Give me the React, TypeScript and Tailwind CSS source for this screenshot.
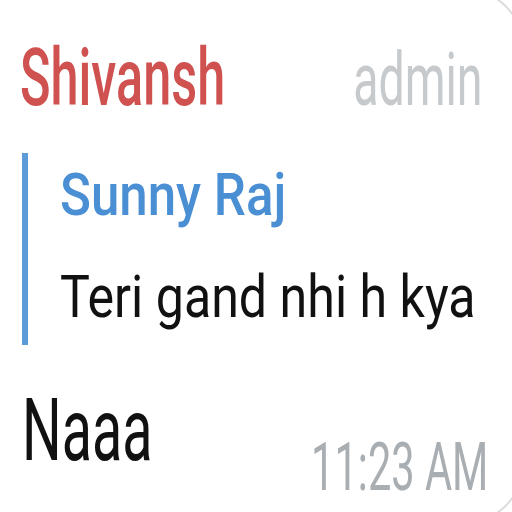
import React from "react";

export default function App() {
  return (
    <div className="relative w-[512px] h-[512px] overflow-hidden bg-white font-['Roboto',sans-serif]">
      <div className="pointer-events-none absolute top-[-12px] right-[-12px] bottom-[-12px] left-[-80px] rounded-[60px] border-2 border-[#dcdcdc]" />
      <div className="flex flex-col pl-[20px] pr-[29px] pt-[38px]">
        <div className="flex items-baseline justify-between h-[80px]">
          <div className="flex w-[205px] items-baseline justify-start">
            <span className="inline-block shrink-0 origin-left scale-x-[0.63] whitespace-nowrap text-[80px] leading-[80px] font-medium text-[#cf5150]">
              Shivansh
            </span>
          </div>
          <div className="flex w-[128px] items-baseline justify-end">
            <span className="inline-block shrink-0 origin-right scale-x-[0.62] whitespace-nowrap text-[75px] leading-[80px] text-[#c6cacd]">
              admin
            </span>
          </div>
        </div>
        <div className="ml-[2px] mt-[35px] flex flex-col border-l-[6px] border-[#5a9bd8] pl-[32px] pt-[12px] pb-[19px]">
          <span className="inline-block origin-left scale-x-[0.865] whitespace-nowrap text-[59px] leading-[59px] font-medium text-[#4a8fd4]">
            Sunny Raj
          </span>
          <span className="mt-[43px] inline-block origin-left scale-x-[0.85] whitespace-nowrap text-[59px] leading-[59px] text-[#111111]">
            Teri gand nhi h kya
          </span>
        </div>
        <div className="mt-[42px] flex items-start justify-between pl-[2px] mr-[-5px]">
          <div className="flex w-[130px] justify-start">
            <span className="inline-block shrink-0 origin-left scale-x-[0.64] whitespace-nowrap text-[87px] leading-[87px] text-[#111111]">
              Naaa
            </span>
          </div>
          <div className="mt-[48px] flex w-[178px] justify-end">
            <span className="inline-block shrink-0 origin-right scale-x-[0.63] whitespace-nowrap text-[66px] leading-[66px] text-[#a9aeb3]">
              11:23 AM
            </span>
          </div>
        </div>
      </div>
    </div>
  );
}
